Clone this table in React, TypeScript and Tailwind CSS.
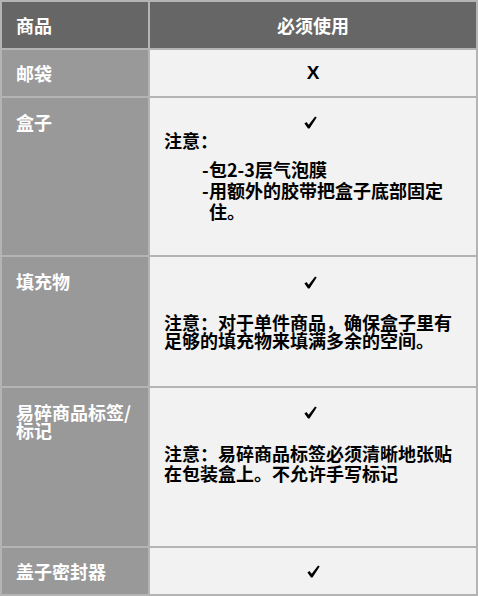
import React from "react";

const font = { fontFamily: '"Noto Sans CJK SC", "Noto Sans", sans-serif' };

// heavy tick, drawn to match the glyph in the picture
const Check = () => (
  <div className="flex justify-center h-[18px] items-center">
    <svg width="13" height="13" viewBox="0 0 13 13" className="ml-[1px]">
      <path d="M0.4 7.4 L2.4 5.9 L4.7 8.7 L11.1 0.4 L12.7 1.4 L5.5 12.6 L4.0 12.6 Z" fill="#000" />
    </svg>
  </div>
);

const LeftCell = ({ children, tall }: { children: React.ReactNode; tall?: boolean }) => (
  <div
    className={
      tall
        ? "bg-[#999999] pl-[14px] pr-2 pt-[15px] text-[18px] leading-[18px] font-bold text-white"
        : "bg-[#999999] pl-[14px] pr-2 flex items-center text-[18px] leading-[18px] font-bold text-white"
    }
  >
    <div>{children}</div>
  </div>
);

const App = () => {
  return (
    <div className="w-[478px] h-[596px] bg-[#b4b4b4] p-[2px]" style={font}>
      <div className="grid grid-cols-[146px_326px] grid-rows-[46px_46px_157px_129px_158px_46px] gap-[2px] h-full">
        {/* header */}
        <div className="bg-[#666666] pl-[14px] flex items-center text-[18px] font-bold text-white">商品</div>
        <div className="bg-[#666666] flex items-center justify-center text-[18px] font-bold text-white">必须使用</div>

        {/* 邮袋 */}
        <LeftCell>邮袋</LeftCell>
        <div className="bg-[#f2f2f2] flex items-center justify-center">
          <span className="text-[19px] font-bold text-black" style={{ fontFamily: '"Liberation Sans", sans-serif' }}>
            X
          </span>
        </div>

        {/* 盒子 */}
        <LeftCell tall>盒子</LeftCell>
        <div className="bg-[#f2f2f2] pl-[14px] pr-[21px] pt-[15px] text-[18px] font-bold text-black">
          <Check />
          <div className="leading-[18px]">注意：</div>
          <ul className="mt-[10px] pl-[38px] leading-[21px]">
            <li className="flex">
              <span className="w-[7px] shrink-0">-</span>
              <span>包2-3层气泡膜</span>
            </li>
            <li className="flex">
              <span className="w-[7px] shrink-0">-</span>
              <span>用额外的胶带把盒子底部固定住。</span>
            </li>
          </ul>
        </div>

        {/* 填充物 */}
        <LeftCell tall>填充物</LeftCell>
        <div className="bg-[#f2f2f2] pl-[14px] pr-[21px] pt-[16px] text-[18px] font-bold text-black">
          <Check />
          <p className="mt-[22px] leading-[18px]">注意：对于单件商品，确保盒子里有足够的填充物来填满多余的空间。</p>
        </div>

        {/* 易碎商品标签 */}
        <LeftCell tall>易碎商品标签/标记</LeftCell>
        <div className="bg-[#f2f2f2] pl-[14px] pr-[21px] pt-[15px] text-[18px] font-bold text-black">
          <Check />
          <p className="mt-[22px] leading-[20px]">注意：易碎商品标签必须清晰地张贴在包装盒上。不允许手写标记</p>
        </div>

        {/* 盖子密封器 */}
        <LeftCell>盖子密封器</LeftCell>
        <div className="bg-[#f2f2f2] flex items-center justify-center">
          <Check />
        </div>
      </div>
    </div>
  );
};

export default App;
